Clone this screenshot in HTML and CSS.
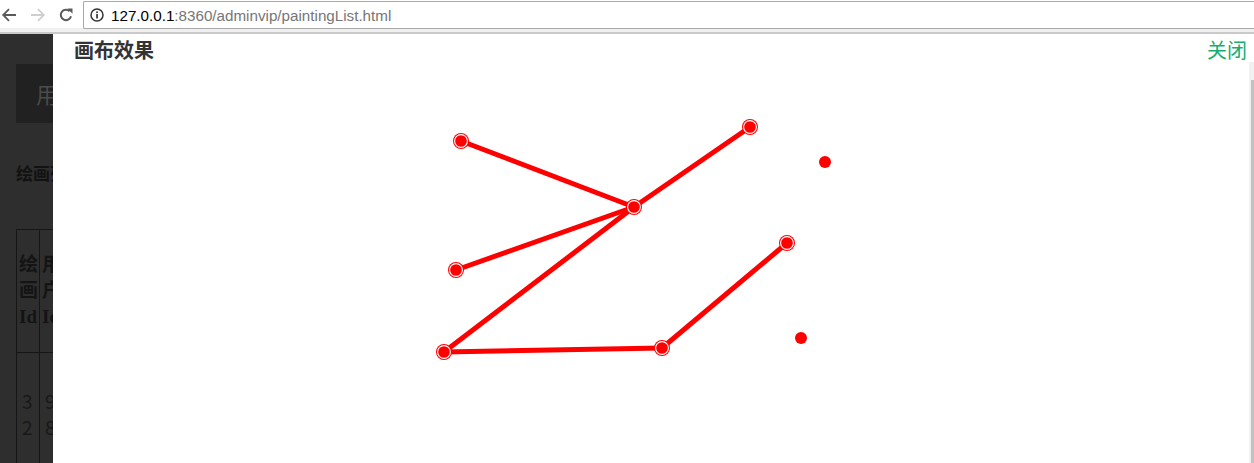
FILE: index.html
```html
<!DOCTYPE html>
<html lang="zh-CN">
<head>
<meta charset="utf-8">
<title>paintingList</title>
<link rel="stylesheet" href="styles.css">
</head>
<body>
<div class="chrome">
  <div class="nav">
    <svg class="nav-icon" width="16" height="16" viewBox="0 0 16 16"><path d="M15 8H2.5M8 2.2L2.2 8 8 13.8" fill="none" stroke="#5a5a5a" stroke-width="1.8"/></svg>
    <svg class="nav-icon fwd" width="16" height="16" viewBox="0 0 16 16"><path d="M1 8h12.5M8 2.2L13.8 8 8 13.8" fill="none" stroke="#cfcfcf" stroke-width="1.8"/></svg>
    <svg class="nav-icon reload" width="16" height="16" viewBox="0 0 16 16"><path d="M13 9.2A5.2 5.2 0 1 1 11.6 4.2" fill="none" stroke="#5a5a5a" stroke-width="2"/><path d="M9.3 1.6h5.2v5.2z" fill="#5a5a5a"/></svg>
  </div>
  <div class="address">
    <svg class="info" width="14" height="14" viewBox="0 0 14 14"><circle cx="7" cy="7" r="6" fill="none" stroke="#333" stroke-width="1.5"/><rect x="6.2" y="6" width="1.7" height="4.5" fill="#333"/><rect x="6.2" y="3.4" width="1.7" height="1.7" fill="#333"/></svg>
    <span class="host">127.0.0.1</span><span class="path">:8360/adminvip/paintingList.html</span>
  </div>
</div>
<div class="stage">
  <div class="backdrop">
    <div class="page">
      <div class="page-btn">用户管理</div>
      <div class="page-title">绘画列表</div>
      <table class="page-table">
        <tr class="head-row"><th>绘画Id</th><th>用户Id</th><th class="rest"></th></tr>
        <tr class="data-row"><td>32</td><td>98</td><td class="rest"></td></tr>
      </table>
    </div>
  </div>
  <div class="modal">
    <div class="modal-head">
      <span class="modal-title">画布效果</span>
      <span class="modal-close">关闭</span>
    </div>
    <div class="modal-body">
      <svg class="canvas" width="1196" height="401" viewBox="53 62 1196 401">
        <g stroke="#ff0000" stroke-width="5" stroke-linecap="round" fill="none">
          <line x1="461" y1="141" x2="634" y2="207"/>
          <line x1="456" y1="270" x2="634" y2="207"/>
          <line x1="444" y1="352" x2="634" y2="207"/>
          <line x1="634" y1="207" x2="750" y2="127"/>
          <line x1="444" y1="352" x2="662" y2="348"/>
          <line x1="662" y1="348" x2="787" y2="243"/>
        </g>
        <g class="nodes">
          <g transform="translate(461 141)"><circle r="8" fill="#ff0000"/><circle r="6.4" fill="#ff0000" stroke="#fff" stroke-width="1.1"/></g>
          <g transform="translate(634 207)"><circle r="8" fill="#ff0000"/><circle r="6.4" fill="#ff0000" stroke="#fff" stroke-width="1.1"/></g>
          <g transform="translate(750 127)"><circle r="8" fill="#ff0000"/><circle r="6.4" fill="#ff0000" stroke="#fff" stroke-width="1.1"/></g>
          <g transform="translate(456 270)"><circle r="8" fill="#ff0000"/><circle r="6.4" fill="#ff0000" stroke="#fff" stroke-width="1.1"/></g>
          <g transform="translate(444 352)"><circle r="8" fill="#ff0000"/><circle r="6.4" fill="#ff0000" stroke="#fff" stroke-width="1.1"/></g>
          <g transform="translate(662 348)"><circle r="8" fill="#ff0000"/><circle r="6.4" fill="#ff0000" stroke="#fff" stroke-width="1.1"/></g>
          <g transform="translate(787 243)"><circle r="8" fill="#ff0000"/><circle r="6.4" fill="#ff0000" stroke="#fff" stroke-width="1.1"/></g>
          <circle cx="825" cy="162" r="6" fill="#ff0000"/>
          <circle cx="801" cy="338" r="6" fill="#ff0000"/>
        </g>
      </svg>
      <div class="scrollbar"><div class="thumb"></div></div>
    </div>
  </div>
</div>
</body>
</html>
```
FILE: styles.css
```css
* { box-sizing: border-box; }
html, body { margin: 0; padding: 0; }
body {
  width: 1254px;
  height: 463px;
  overflow: hidden;
  background: #fff;
  font-family: "Liberation Sans", "Noto Sans CJK SC", sans-serif;
}
.chrome {
  height: 34px;
  display: flex;
  align-items: flex-start;
  background: #fff;
  border-bottom: 2px solid #c9c9c9;
  box-shadow: inset 0 -4px 0 #f0f0f0;
}
.nav {
  display: flex;
  align-items: center;
  height: 29px;
  padding-left: 1px;
  width: 83px;
}
.nav-icon { display: block; }
.nav-icon.fwd { margin-left: 13px; }
.nav-icon.reload { margin-left: 12px; }
.address {
  flex: 1;
  height: 28px;
  margin-top: 1px;
  border: 1px solid #a9a9a9;
  border-right: none;
  border-radius: 2px 0 0 2px;
  background: #fff;
  display: flex;
  align-items: center;
  padding-left: 6px;
  font-size: 15.2px;
  font-family: "Liberation Sans", "Noto Sans", sans-serif;
}
.info { margin-right: 7px; display: block; }
.host { color: #000; }
.path { color: #767676; }
.stage {
  display: flex;
  height: 429px;
}
.backdrop {
  width: 53px;
  flex: none;
  background: #2e2e2e;
  overflow: hidden;
}
.page {
  width: 400px;
  padding: 30px 0 0 16px;
}
.page-btn {
  width: 200px;
  height: 59px;
  line-height: 59px;
  padding-left: 20px;
  background: #212121;
  color: #4b4b4b;
  font-size: 22px;
  font-family: "Noto Sans CJK SC", sans-serif;
}
.page-title {
  margin-top: 38px;
  font-size: 17px;
  line-height: 24px;
  font-weight: bold;
  color: #121212;
  font-family: "Noto Sans CJK SC", sans-serif;
}
.page-table {
  margin-top: 44px;
  border-collapse: collapse;
  table-layout: fixed;
  width: 300px;
  color: #141414;
}
.page-table th, .page-table td {
  border: 1px solid #161616;
  padding: 0 1px 0 2px;
  width: 23px;
  font-size: 19px;
  line-height: 26px;
  word-break: break-all;
  vertical-align: middle;
  text-align: left;
}
.page-table th {
  font-family: "Liberation Serif", "Noto Sans CJK SC", serif;
  font-weight: bold;
  height: 123px;
}
.page-table td {
  height: 122px;
  font-family: "Noto Sans CJK SC", sans-serif;
  font-weight: normal;
  padding-left: 5px;
  color: #181818;
}
.page-table .rest { width: auto; }
.modal {
  flex: 1;
  background: #fff;
  display: flex;
  flex-direction: column;
}
.modal-head {
  height: 28px;
  display: flex;
  justify-content: space-between;
  align-items: center;
  padding: 0 7px 0 21px;
}
.modal-title {
  font-size: 20px;
  font-weight: bold;
  color: #333;
  font-family: "Noto Sans CJK SC", sans-serif;
  line-height: 28px;
  margin-top: 3px;
}
.modal-close {
  font-size: 20px;
  color: #17ad70;
  font-family: "Noto Sans CJK SC", sans-serif;
  line-height: 28px;
  margin-top: 4px;
}
.modal-body {
  flex: 1;
  display: flex;
}
.canvas { display: block; flex: none; }
.scrollbar {
  width: 5px;
  background: #f1f1f1;
  padding-top: 18px;
  padding-left: 2px;
}
.thumb {
  height: 100%;
  background: #c1c1c1;
}
```
